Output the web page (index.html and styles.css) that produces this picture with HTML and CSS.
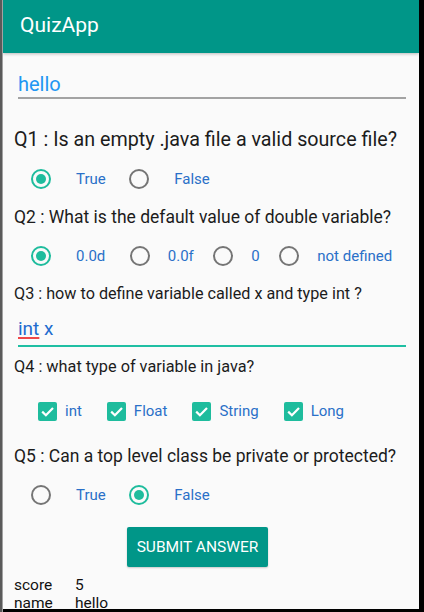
FILE: index.html
```html
<!DOCTYPE html>
<html>
<head>
<meta charset="utf-8">
<link rel="stylesheet" href="styles.css">
</head>
<body>
<div class="edge"></div>
<div class="screen">
  <header class="toolbar"><span class="title">QuizApp</span></header>
  <main class="content">
    <div class="field name-field">hello</div>

    <p class="q q1">Q1 : Is an empty .java file a valid source file?</p>
    <div class="row">
      <label class="opt"><svg class="radio on" viewBox="0 0 20 20"><circle cx="10" cy="10" r="9" /><circle class="dot" cx="10" cy="10" r="5"/></svg><span class="lbl">True</span></label>
      <label class="opt"><svg class="radio" viewBox="0 0 20 20"><circle cx="10" cy="10" r="9" /></svg><span class="lbl">False</span></label>
    </div>

    <p class="q q2">Q2 : What is the default value of double variable?</p>
    <div class="row dense">
      <label class="opt"><svg class="radio on" viewBox="0 0 20 20"><circle cx="10" cy="10" r="9" /><circle class="dot" cx="10" cy="10" r="5"/></svg><span class="lbl">0.0d</span></label>
      <label class="opt"><svg class="radio" viewBox="0 0 20 20"><circle cx="10" cy="10" r="9" /></svg><span class="lbl">0.0f</span></label>
      <label class="opt"><svg class="radio" viewBox="0 0 20 20"><circle cx="10" cy="10" r="9" /></svg><span class="lbl">0</span></label>
      <label class="opt"><svg class="radio" viewBox="0 0 20 20"><circle cx="10" cy="10" r="9" /></svg><span class="lbl">not defined</span></label>
    </div>

    <p class="q q3">Q3 : how to define variable called x and type int ?</p>
    <div class="field answer-field"><span class="spell">int</span> x</div>

    <p class="q q4">Q4 : what type of variable in java?</p>
    <div class="row checks">
      <label class="chk"><svg class="box" viewBox="0 0 19 19"><rect width="19" height="19" rx="2"/><path d="M4.2 9.6 L7.9 13.2 L15 5.9"/></svg><span class="lbl">int</span></label>
      <label class="chk"><svg class="box" viewBox="0 0 19 19"><rect width="19" height="19" rx="2"/><path d="M4.2 9.6 L7.9 13.2 L15 5.9"/></svg><span class="lbl">Float</span></label>
      <label class="chk"><svg class="box" viewBox="0 0 19 19"><rect width="19" height="19" rx="2"/><path d="M4.2 9.6 L7.9 13.2 L15 5.9"/></svg><span class="lbl">String</span></label>
      <label class="chk"><svg class="box" viewBox="0 0 19 19"><rect width="19" height="19" rx="2"/><path d="M4.2 9.6 L7.9 13.2 L15 5.9"/></svg><span class="lbl">Long</span></label>
    </div>

    <p class="q q5">Q5 : Can a top level class be private or protected?</p>
    <div class="row last">
      <label class="opt"><svg class="radio" viewBox="0 0 20 20"><circle cx="10" cy="10" r="9" /></svg><span class="lbl">True</span></label>
      <label class="opt"><svg class="radio on" viewBox="0 0 20 20"><circle cx="10" cy="10" r="9" /><circle class="dot" cx="10" cy="10" r="5"/></svg><span class="lbl">False</span></label>
    </div>

    <button class="submit">SUBMIT ANSWER</button>

    <div class="result">
      <span class="k">score</span><span class="v">5</span>
      <span class="k">name</span><span class="v">hello</span>
    </div>
  </main>
</div>
</body>
</html>
```

FILE: styles.css
```css
html, body {
  margin: 0;
  padding: 0;
}
body {
  background: #000;
  display: flex;
  height: 612px;
  overflow: hidden;
  font-family: Roboto, "Noto Sans", sans-serif;
}
.edge {
  width: 3px;
  height: 612px;
  flex: none;
  background: linear-gradient(to right, #5a5a5a 0 2px, #a2a2a2 2px 3px);
}
.screen {
  width: 416px;
  height: 609px;
  flex: none;
  background: #fafafa;
  overflow: hidden;
  display: flex;
  flex-direction: column;
}
.toolbar {
  height: 53px;
  flex: none;
  background: #009688;
  box-sizing: border-box;
  padding: 13px 0 0 17px;
  box-shadow: 0 1px 3px rgba(0,0,0,0.25);
  position: relative;
  z-index: 1;
}
.title {
  color: #fff;
  font-size: 21px;
  line-height: 24px;
  display: block;
}
.content {
  padding: 0 11px;
  display: flex;
  flex-direction: column;
  align-items: flex-start;
}
.field {
  align-self: stretch;
  margin: 0 2px 0 4px;
  font-size: 20px;
  line-height: 24px;
  border-bottom: 2px solid #a3a3a3;
}
.name-field {
  margin-top: 19px;
  padding-bottom: 1px;
  color: #2196f3;
}
.answer-field {
  margin-top: 13px;
  padding-bottom: 4px;
  font-size: 19px;
  color: #1f6ccf;
  border-bottom-color: #1fbfa3;
}
.spell {
  text-decoration: underline;
  text-decoration-color: #f04848;
  text-decoration-thickness: 2px;
  text-underline-offset: 2px;
}
.q {
  margin: 0;
  color: #1c1c1c;
}
.q1 { margin-top: 29px; font-size: 19.7px; line-height: 24px; }
.q2 { margin-top: 11px; font-size: 17.5px; line-height: 22px; }
.q3 { margin-top: 12px; font-size: 16.2px; line-height: 20px; }
.q4 { margin-top: 10px; font-size: 16.3px; line-height: 20px; }
.q5 { margin-top: 18px; font-size: 17.5px; line-height: 22px; }

.row {
  display: flex;
  align-items: center;
  height: 32px;
  margin-top: 11px;
  padding-left: 17px;
  gap: 23.5px;
}
.q2 + .row { margin-top: 12px; }
.row.dense { gap: 19.5px; }
.row.dense .opt:first-child { margin-right: 5px; }
.row.dense .opt + .opt .lbl { margin-left: 18px; }
.row.checks {
  margin-top: 18px;
  padding-left: 24px;
  gap: 25px;
}
.row.last { margin-top: 12px; }

.opt, .chk {
  display: flex;
  align-items: center;
}
.lbl {
  font-size: 15px;
  color: #2a70c8;
  margin-left: 25px;
}
.chk .lbl { margin-left: 8px; }
.radio {
  width: 20px;
  height: 20px;
  flex: none;
}
.radio circle {
  fill: none;
  stroke: #757575;
  stroke-width: 2;
}
.radio.on circle {
  stroke: #1ebc9d;
}
.radio.on circle.dot {
  fill: #1ebc9d;
  stroke: none;
}
.box {
  width: 19px;
  height: 19px;
  flex: none;
}
.box rect { fill: #1ebc9d; }
.box path {
  fill: none;
  stroke: #fff;
  stroke-width: 2.2;
}
.submit {
  margin: 16px 0 0 113px;
  width: 141px;
  height: 40px;
  border: none;
  border-radius: 2px;
  background: #009688;
  color: #fff;
  font-family: Roboto, sans-serif;
  font-size: 15.5px;
  padding: 0;
  box-shadow: 0 1px 2px rgba(0,0,0,0.2);
}
.result {
  margin-top: 9px;
  display: grid;
  grid-template-columns: 61px auto;
  font-size: 15.5px;
  line-height: 18px;
  color: #111;
}
```
